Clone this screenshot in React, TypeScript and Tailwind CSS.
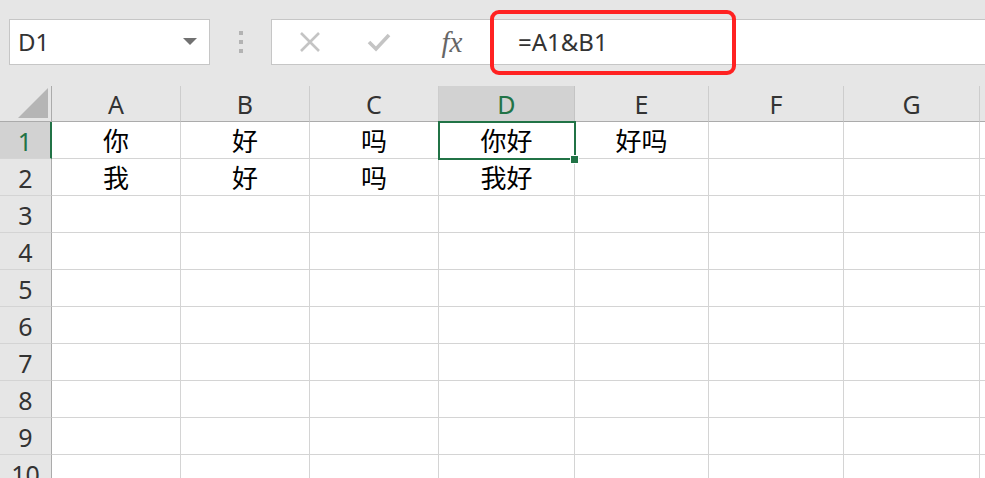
import React from "react";

const cols = [
  { l: "A", w: 129 },
  { l: "B", w: 129 },
  { l: "C", w: 129 },
  { l: "D", w: 136 },
  { l: "E", w: 134 },
  { l: "F", w: 135 },
  { l: "G", w: 136 },
];

const data: Record<string, string> = {
  "1A": "你",
  "1B": "好",
  "1C": "吗",
  "1D": "你好",
  "1E": "好吗",
  "2A": "我",
  "2B": "好",
  "2C": "吗",
  "2D": "我好",
};

const font = {
  fontFamily: '"Noto Sans", "Noto Sans CJK SC", sans-serif',
};

export default function App() {
  const rows = [1, 2, 3, 4, 5, 6, 7, 8, 9, 10];
  return (
    <div className="w-[985px] h-[478px] overflow-hidden bg-white relative" style={font}>
      {/* toolbar */}
      <div className="h-[86px] bg-[#e6e6e6] flex items-start pt-[19px] pl-[9px]">
        <div className="w-[201px] h-[46px] bg-white border border-[#c6c6c6] flex items-center justify-between pl-[8px] pr-[12px]">
          <span className="text-[24px] text-[#333] leading-none">D1</span>
          <svg width="14" height="8" viewBox="0 0 14 8">
            <path d="M0 0 L14 0 L7 7 Z" fill="#717171" />
          </svg>
        </div>
        <div className="w-[61px] h-[46px] flex flex-col items-center justify-center gap-[5px]">
          <div className="w-[4px] h-[4px] bg-[#b3b3b3]" />
          <div className="w-[4px] h-[4px] bg-[#b3b3b3]" />
          <div className="w-[4px] h-[4px] bg-[#b3b3b3]" />
        </div>
        <div className="flex-1 h-[46px] bg-white border border-r-0 border-[#c6c6c6] flex items-center">
          <div className="w-[74px] flex justify-center pl-[2px]">
            <svg width="22" height="22" viewBox="0 0 22 22">
              <path d="M2 2 L20 20 M20 2 L2 20" stroke="#c4c4c4" strokeWidth="2.6" />
            </svg>
          </div>
          <div className="w-[66px] flex justify-center">
            <svg width="24" height="20" viewBox="0 0 24 20">
              <path d="M2 10 L9 17 L22 3" stroke="#c4c4c4" strokeWidth="3.6" fill="none" />
            </svg>
          </div>
          <div className="w-[80px] flex justify-center">
            <span
              className="text-[29px] italic text-[#666] leading-none"
              style={{ fontFamily: '"Liberation Serif", "DejaVu Serif", serif' }}
            >
              fx
            </span>
          </div>
          <div className="pl-[26px] text-[24px] text-[#333] leading-none">=A1&amp;B1</div>
        </div>
      </div>

      {/* red annotation box */}
      <div className="absolute left-[490px] top-[10px] w-[246px] h-[65px] border-4 border-[#ff2222] rounded-[9px] z-20" />

      {/* grid */}
      <div
        className="grid relative"
        style={{
          gridTemplateColumns: `52px ${cols.map((c) => c.w + "px").join(" ")} 1fr`,
        }}
      >
        {/* header row */}
        <div className="h-[36px] bg-[#e6e6e6] border-b border-r border-[#ababab] relative">
          <svg className="absolute right-[3px] bottom-[3px]" width="30" height="30" viewBox="0 0 30 30">
            <path d="M30 0 L30 30 L0 30 Z" fill="#b5b5b5" />
          </svg>
        </div>
        {cols.map((c) => (
          <div
            key={c.l}
            className={`h-[36px] border-b border-r border-b-[#ababab] flex items-center justify-center text-[25px] leading-none pt-[2px] ${
              c.l === "D"
                ? "bg-[#d2d2d2] text-[#217346] border-r-[#c4c4c4]"
                : "bg-[#e6e6e6] text-[#333] border-r-[#cdcdcd]"
            }`}
          >
            {c.l}
          </div>
        ))}
        <div className="h-[36px] bg-[#e6e6e6] border-b border-[#ababab]" />

        {rows.map((r) => (
          <React.Fragment key={r}>
            <div
              className={`h-[37px] border-b border-[#d4d4d4] flex items-center justify-center text-[25px] leading-none pt-[2px] ${
                r === 1
                  ? "bg-[#d2d2d2] text-[#217346] border-r-2 border-r-[#217346]"
                  : "bg-[#e6e6e6] text-[#333] border-r border-r-[#ababab]"
              }`}
            >
              {r}
            </div>
            {cols.map((c) => {
              const v = data[`${r}${c.l}`];
              return (
                <div
                  key={c.l}
                  className="h-[37px] border-b border-r border-[#d4d4d4] flex items-center justify-center text-[26px] leading-none text-black pt-[2px]"
                >
                  {v}
                </div>
              );
            })}
            <div className="h-[37px] border-b border-[#d4d4d4]" />
          </React.Fragment>
        ))}

        {/* selection overlay on D1 */}
        <div className="absolute left-[438px] top-[35px] w-[138px] h-[39px] border-2 border-[#217346] z-10 pointer-events-none" />
        <div className="absolute left-[570px] top-[69px] w-[9px] h-[9px] bg-[#217346] border border-white z-10" />
      </div>
    </div>
  );
}
